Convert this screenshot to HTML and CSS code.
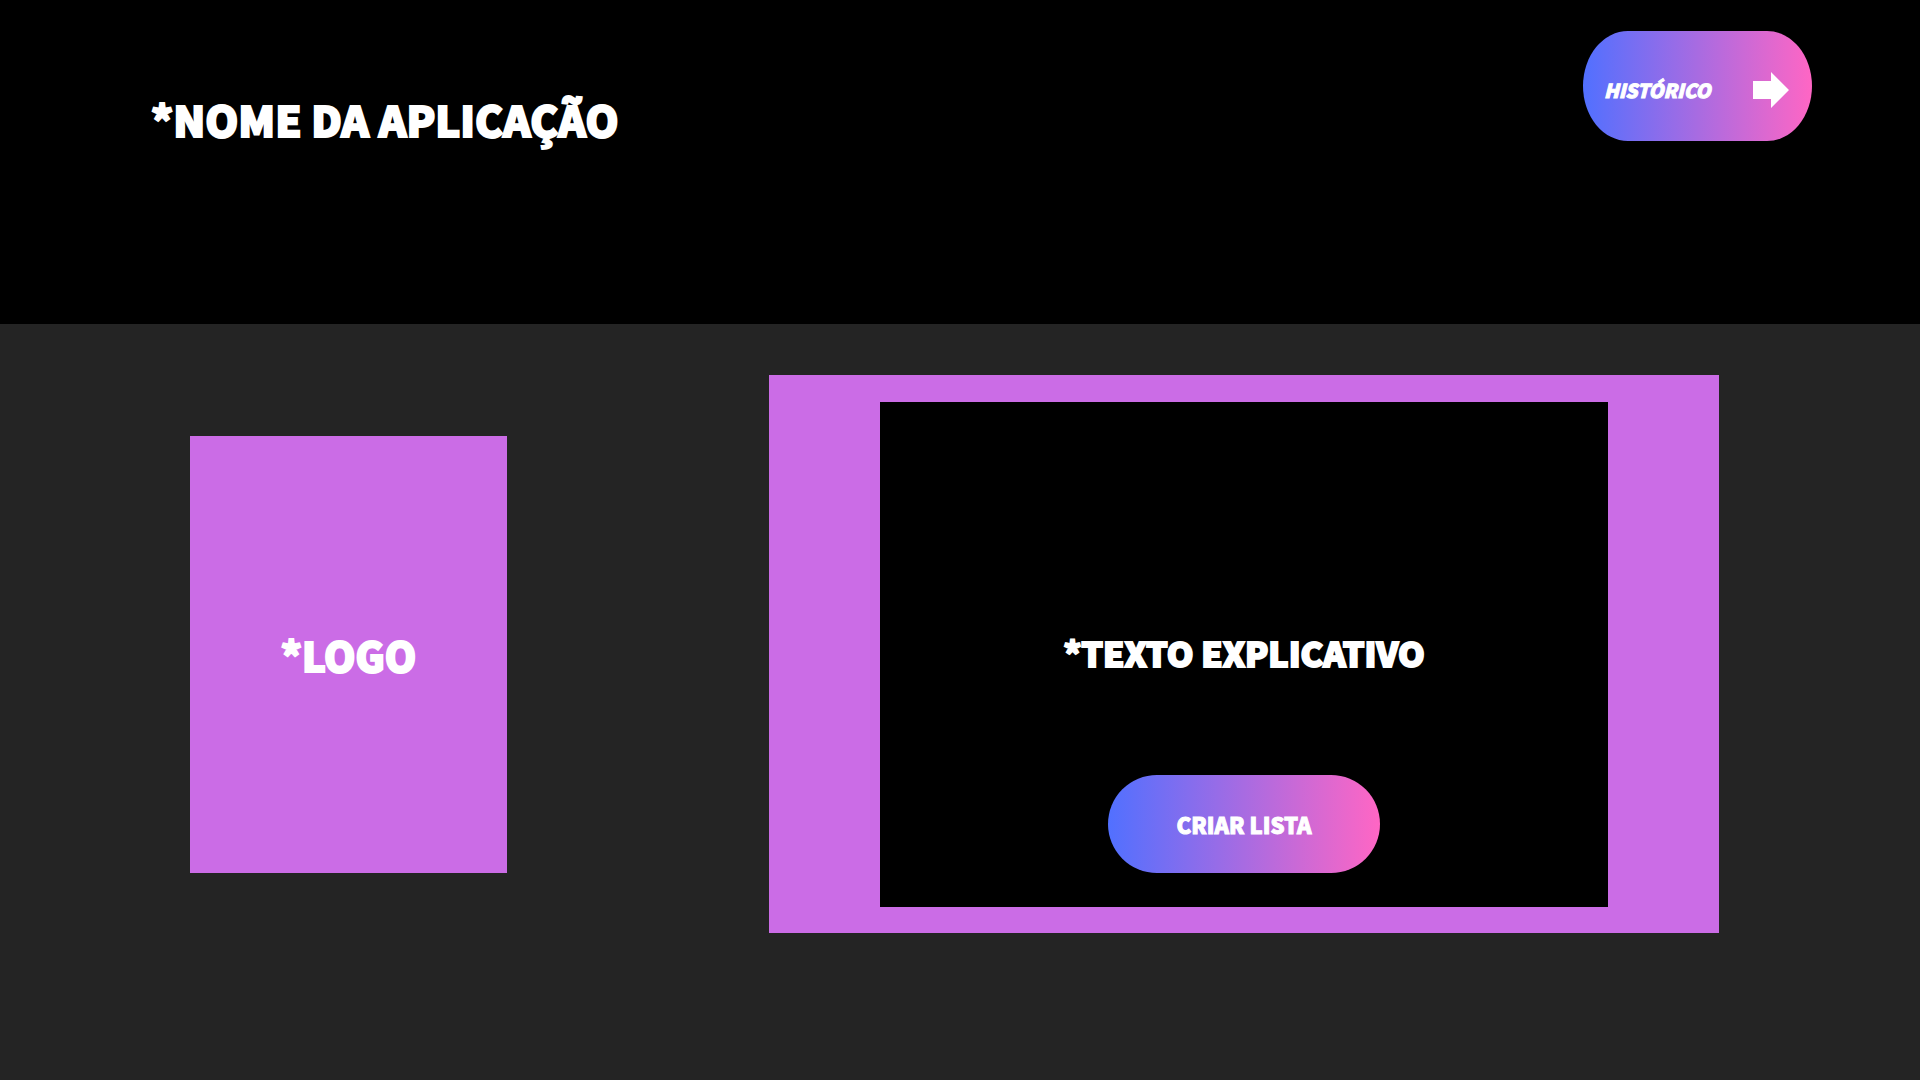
FILE: index.html
```html
<!DOCTYPE html>
<html lang="pt-BR">
<head>
<meta charset="utf-8">
<meta name="viewport" content="width=device-width, initial-scale=1">
<title>Nome da aplicação</title>
<link rel="stylesheet" href="styles.css">
</head>
<body>
<header class="topbar">
  <h1 class="title">*NOME DA APLICAÇÃO</h1>
  <button class="pill pill-history" type="button">
    <span>HISTÓRICO</span>
    <svg class="arrow" viewBox="0 0 36 36" aria-hidden="true"><path d="M0 9H18V0L36 18L18 36V27H0Z" fill="#fff"/></svg>
  </button>
</header>
<main class="content">
  <div class="logo">*LOGO</div>
  <section class="frame">
    <div class="panel">
      <p class="intro">*TEXTO EXPLICATIVO</p>
      <button class="pill pill-create" type="button">CRIAR LISTA</button>
    </div>
  </section>
</main>
</body>
</html>
```
FILE: styles.css
```css
* {
  box-sizing: border-box;
}

body {
  margin: 0;
  min-height: 100vh;
  display: flex;
  flex-direction: column;
  background: #242424;
  color: #fff;
  font-family: "Noto Sans CJK JP", "Open Sans", sans-serif;
  font-weight: 900;
}

.topbar {
  display: flex;
  justify-content: space-between;
  align-items: flex-start;
  min-height: 324px;
  padding: 31px 108px 0 151px;
  background: #000;
}

.title {
  margin: 58px 0 0;
  font-size: 42px;
  line-height: 60px;
  font-weight: inherit;
  -webkit-text-stroke: 2px #fff;
}

.pill {
  border: 0;
  color: #fff;
  background: linear-gradient(90deg, #5170ff, #ff66c4);
  font-family: inherit;
  font-size: 22px;
  font-weight: inherit;
  line-height: 28px;
  -webkit-text-stroke: 1px #fff;
  cursor: pointer;
}

.pill-history {
  display: flex;
  justify-content: space-between;
  align-items: center;
  width: 229px;
  height: 110px;
  padding: 8px 23px 0 21px;
  border-radius: 45px / 55px;
  font-size: 19px;
  font-style: italic;
}

.arrow {
  width: 36px;
  height: 36px;
}

.content {
  flex: 1;
  display: grid;
  grid-template-columns: 317fr 950fr;
  column-gap: 262px;
  align-items: start;
  padding: 51px 201px 51px 190px;
}

.logo {
  display: flex;
  justify-content: center;
  align-items: center;
  min-height: 437px;
  margin-top: 61px;
  background: #cb6ce6;
  font-size: 40px;
  line-height: 60px;
  -webkit-text-stroke: 2px #fff;
}

.frame {
  padding: 27px 111px 26px;
  background: #cb6ce6;
}

.panel {
  display: flex;
  flex-direction: column;
  align-items: center;
  justify-content: flex-end;
  gap: 92px;
  min-height: 505px;
  padding-bottom: 34px;
  background: #000;
}

.intro {
  margin: 0;
  font-size: 34px;
  line-height: 60px;
  -webkit-text-stroke: 2px #fff;
}

.pill-create {
  width: 272px;
  height: 98px;
  border-radius: 49px;
}
```
